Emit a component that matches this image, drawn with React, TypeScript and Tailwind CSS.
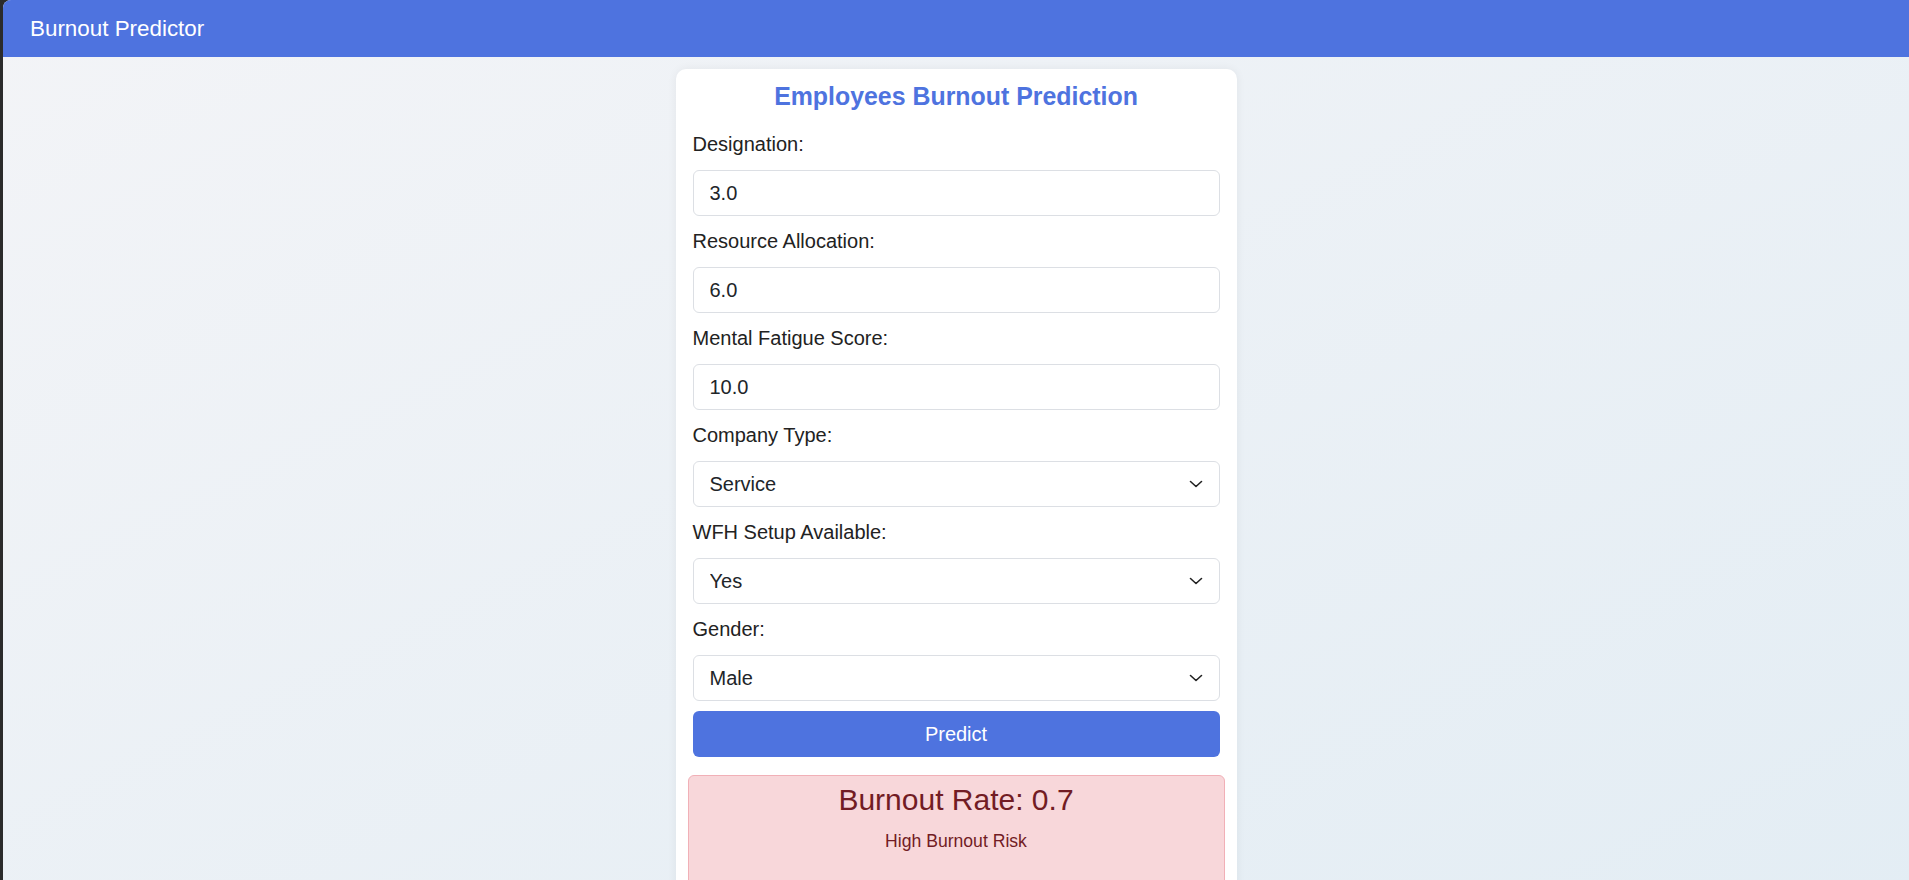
import { useState } from "react";

type Field = {
  label: string;
  name: string;
  kind: "input" | "select";
  value: string;
  options?: string[];
};

const fields: Field[] = [
  { label: "Designation:", name: "designation", kind: "input", value: "3.0" },
  { label: "Resource Allocation:", name: "resource", kind: "input", value: "6.0" },
  { label: "Mental Fatigue Score:", name: "fatigue", kind: "input", value: "10.0" },
  { label: "Company Type:", name: "company", kind: "select", value: "Service", options: ["Service", "Product"] },
  { label: "WFH Setup Available:", name: "wfh", kind: "select", value: "Yes", options: ["Yes", "No"] },
  { label: "Gender:", name: "gender", kind: "select", value: "Male", options: ["Male", "Female"] },
];

function Chevron() {
  return (
    <svg
      width="14"
      height="8"
      viewBox="0 0 14 8"
      fill="none"
      stroke="#222"
      strokeWidth="1.6"
      strokeLinecap="round"
      strokeLinejoin="round"
      className="pointer-events-none absolute right-[17px] top-1/2 -translate-y-1/2"
    >
      <path d="M1.5 1.5 L7 6.5 L12.5 1.5" />
    </svg>
  );
}

export default function App() {
  const [values, setValues] = useState<Record<string, string>>(
    Object.fromEntries(fields.map((f) => [f.name, f.value]))
  );

  const inputCls =
    "w-full h-[46px] px-[16px] rounded-[6px] border border-[#dcdfe4] bg-white text-[20px] text-[#212529] outline-none";

  return (
    <div className="flex min-h-screen bg-[#2b2b2b] font-['Liberation_Sans',Arial,sans-serif]">
      <div className="ml-[3px] flex-1 overflow-hidden rounded-tl-[8px] bg-linear-to-br from-[#f3f4f7] to-[#e3edf4]">
        <header className="flex h-[57px] items-center bg-[#4e73df] px-[27px]">
          <span className="text-[22.4px] text-white">Burnout Predictor</span>
        </header>

        <main className="flex justify-center pt-[12px]">
          <div className="w-[561px] rounded-[10px] bg-white px-[17px] pt-[13px] pb-[30px] shadow-[0_0_10px_rgba(0,0,0,0.06)]">
            <h2 className="mb-[22px] text-center text-[24.9px] font-bold leading-[29px] text-[#4e73df]">
              Employees Burnout Prediction
            </h2>

            {fields.map((f, i) => (
              <div key={f.name}>
                <label
                  className={
                    (i === 0 ? "mt-0" : "mt-[14px]") +
                    " mb-[14px] block text-[20px] leading-[23px] text-[#222]"
                  }
                >
                  {f.label}
                </label>
                {f.kind === "input" ? (
                  <input
                    className={inputCls}
                    value={values[f.name]}
                    onChange={(e) => setValues({ ...values, [f.name]: e.target.value })}
                  />
                ) : (
                  <div className="relative">
                    <select
                      className={inputCls + " appearance-none"}
                      value={values[f.name]}
                      onChange={(e) => setValues({ ...values, [f.name]: e.target.value })}
                    >
                      {f.options?.map((o) => (
                        <option key={o}>{o}</option>
                      ))}
                    </select>
                    <Chevron />
                  </div>
                )}
              </div>
            ))}

            <button className="mt-[10px] h-[46px] w-full rounded-[6px] bg-[#4e73df] text-[20px] text-white">
              Predict
            </button>

            <div className="mx-[-5px] mt-[18px] rounded-[6px] border border-[#f1b0b7] bg-[#f8d7da] px-4 pt-[7px] pb-[40px] text-center text-[#721c24]">
              <div className="text-[30px] leading-[34px]">Burnout Rate: 0.7</div>
              <p className="mt-[14px] text-[17.6px] leading-[20px]">High Burnout Risk</p>
            </div>
          </div>
        </main>
      </div>
    </div>
  );
}
